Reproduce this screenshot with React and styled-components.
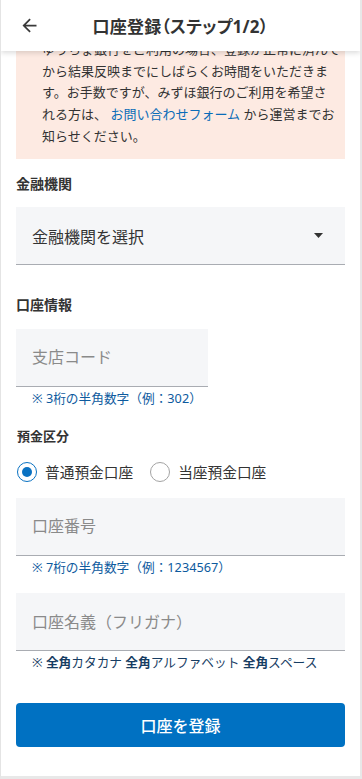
import React, { useState } from "react"
import styled, { createGlobalStyle } from "styled-components"
import { MdArrowBack } from "react-icons/md"

const GlobalStyle = createGlobalStyle`
  body {
    margin: 0;
    background: #ffffff;
    font-family: "Noto Sans", "Noto Sans CJK JP", sans-serif;
    color: #333333;
  }
  * {
    box-sizing: border-box;
  }
`

const Header = () => {
  return (
    <HeaderBar>
      <BackButton aria-label="戻る">
        <MdArrowBack size={21} />
      </BackButton>
      <Title>口座登録（ステップ1/2）</Title>
      <span />
    </HeaderBar>
  )
}

const Notice = () => {
  return (
    <NoticeBox>
      <NoticeText>
        <span>ゆうちょ銀行をご利用の場合、登録が正常に済んで</span>
        <span>から結果反映までにしばらくお時間をいただきま</span>
        <span>す。お手数ですが、みずほ銀行のご利用を希望さ</span>
        <span>
          れる方は、 <NoticeLink href="#">お問い合わせフォーム</NoticeLink> から運営までお
        </span>
        <span>知らせください。</span>
      </NoticeText>
    </NoticeBox>
  )
}

const Radio = ({ label, checked, onChange }) => {
  return (
    <RadioLabel onClick={onChange}>
      <RadioCircle checked={checked} />
      <span>{label}</span>
    </RadioLabel>
  )
}

const App = () => {
  const [kind, setKind] = useState("normal")

  return (
    <>
      <GlobalStyle />
      <Frame>
        <Header />
        <Content>
          <Notice />

          <SectionLabel top={15}>金融機関</SectionLabel>
          <SelectBox>
            <span>金融機関を選択</span>
            <svg width="9" height="5" viewBox="0 0 9 5">
              <path d="M0 0 L9 0 L4.5 5 Z" fill="#333" />
            </svg>
          </SelectBox>

          <SectionLabel top={30}>口座情報</SectionLabel>
          <Field narrow placeholder="支店コード" />
          <Helper>※ 3桁の半角数字（例：302）</Helper>

          <SmallLabel>預金区分</SmallLabel>
          <RadioRow>
            <Radio label="普通預金口座" checked={kind === "normal"} onChange={() => setKind("normal")} />
            <Radio label="当座預金口座" checked={kind === "current"} onChange={() => setKind("current")} />
          </RadioRow>

          <Field top={14} placeholder="口座番号" />
          <Helper>※ 7桁の半角数字（例：1234567）</Helper>

          <Field top={17.5} placeholder="口座名義（フリガナ）" />
          <Helper dark>
            ※ <b>全角</b>カタカナ <b>全角</b>アルファベット <b>全角</b>スペース
          </Helper>

          <SubmitButton>口座を登録</SubmitButton>
        </Content>
      </Frame>
    </>
  )
}

const Frame = styled.div`
  width: 362px;
  height: 779px;
  overflow: hidden;
  border-left: 1px solid #e4e4e4;
  border-right: 2px solid #e8e8e8;
  border-bottom: 3px solid #e8e8e8;
  display: flex;
  flex-direction: column;
  background: #ffffff;
`

const HeaderBar = styled.header`
  position: relative;
  z-index: 2;
  height: 51px;
  flex-shrink: 0;
  display: grid;
  grid-template-columns: 48px 1fr 48px;
  align-items: center;
  background: #ffffff;
  box-shadow: 0 2px 5px rgba(0, 0, 0, 0.14);
`

const BackButton = styled.button`
  border: none;
  background: none;
  padding: 0 0 0 18px;
  display: flex;
  align-items: center;
  color: #3a3a3a;
  cursor: pointer;
`

const Title = styled.h1`
  margin: 0;
  text-align: center;
  font-size: 17px;
  font-weight: 700;
  color: #333333;
  font-feature-settings: "palt";
  letter-spacing: 0.2px;
`

const Content = styled.main`
  display: flex;
  flex-direction: column;
  padding: 0 15px;
`

const NoticeBox = styled.div`
  background: #fdeae2;
  overflow: hidden;
  padding: 0 10px 11px 26px;
`

const NoticeText = styled.p`
  margin: -12px 0 0;
  font-size: 13px;
  line-height: 21.7px;
  color: #333333;

  span {
    display: block;
    white-space: nowrap;
  }
`

const NoticeLink = styled.a`
  color: #0a6cb8;
  text-decoration: none;
  display: inline !important;
`

const SectionLabel = styled.h2`
  margin: ${({ top }) => top}px 0 13.5px;
  font-size: 14px;
  line-height: 20px;
  font-weight: 700;
  color: #333333;
`

const SmallLabel = styled.h3`
  margin: 19px 0 0 1px;
  font-size: 13px;
  line-height: 20px;
  font-weight: 700;
  color: #333333;
`

const SelectBox = styled.div`
  height: 58px;
  display: flex;
  align-items: center;
  justify-content: space-between;
  padding: 0 22px 0 16px;
  background: #f5f6f8;
  border-bottom: 1px solid #a9acb2;
  font-size: 16px;
  color: #333333;
  cursor: pointer;
`

const Field = styled.input`
  margin-top: ${({ top }) => top || 0}px;
  width: ${({ narrow }) => (narrow ? "192px" : "100%")};
  height: 58px;
  padding: 0 16px;
  border: none;
  border-bottom: 1px solid #a9acb2;
  background: #f5f6f8;
  font-family: inherit;
  font-size: 16px;
  color: #333333;
  outline: none;

  &::placeholder {
    color: #8a8a8a;
  }
`

const Helper = styled.p`
  margin: 2px 0 0 16px;
  font-size: 12.7px;
  line-height: 18px;
  color: ${({ dark }) => (dark ? "#173d63" : "#0d5a9e")};

  b {
    font-weight: 700;
  }
`

const RadioRow = styled.div`
  margin-top: 14px;
  height: 24px;
  display: flex;
  align-items: center;
  gap: 16px;
`

const RadioLabel = styled.label`
  display: flex;
  align-items: center;
  gap: 8px;
  font-size: 14.7px;
  color: #333333;
  cursor: pointer;
`

const RadioCircle = styled.span`
  margin-left: 1px;
  width: 20px;
  height: 20px;
  border-radius: 50%;
  border: ${({ checked }) => (checked ? "1.5px solid #0a72c2" : "1px solid #a3a3a3")};
  display: flex;
  align-items: center;
  justify-content: center;

  &::after {
    content: "";
    width: 10px;
    height: 10px;
    border-radius: 50%;
    background: ${({ checked }) => (checked ? "#0a72c2" : "transparent")};
  }
`

const SubmitButton = styled.button`
  margin-top: 32px;
  height: 44px;
  border: none;
  border-radius: 4px;
  background: #0071c2;
  color: #ffffff;
  font-family: inherit;
  font-size: 16px;
  font-weight: 500;
  cursor: pointer;
`

export default App
